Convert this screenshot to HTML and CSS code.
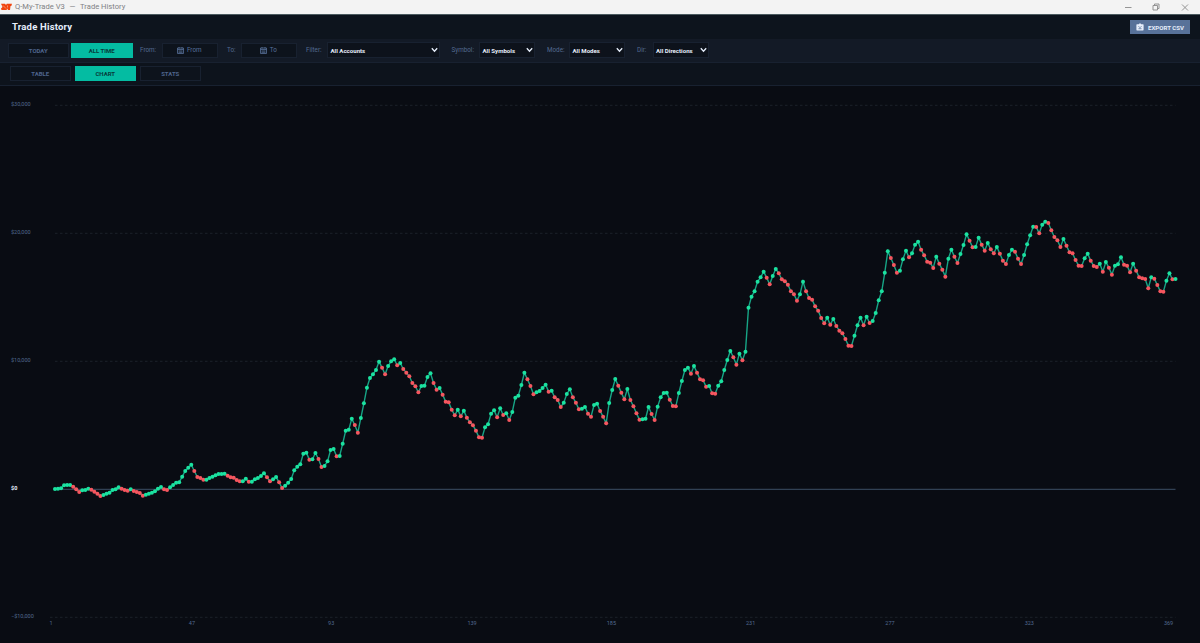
FILE: index.html
```html
<!DOCTYPE html>
<html lang="en">
<head>
  <meta charset="UTF-8">
  <meta name="viewport" content="width=device-width, initial-scale=1.0">
  <title>Q-My-Trade V3 — Trade History</title>
  <link rel="stylesheet" href="styles.css">
</head>
<body>
  <div class="titlebar">
    <svg class="app-icon" width="11" height="8" viewBox="0 0 11 8">
      <path d="M0 .8h4l1 1.200.8-1.200H11L10.300 3H9.500L9 7H7L6.300 5.500 5.500 7H0.500L0 5.500 1.500 4z" fill="#f0440f"/>
      <path d="M2 2.500l3 3M6.500 2.500v2" stroke="#ffd9c8" stroke-width=".5"/>
    </svg>
    <span class="window-title">Q-My-Trade V3 &nbsp;<span class="dash">—</span>&nbsp; Trade History</span>
    <svg class="window-buttons" width="70" height="13" viewBox="0 0 70 13">
      <path d="M5 6.500h6.500M33 4.500h4.500v4.500H33zM34.500 4.500V3h4.500v4.500h-1.500M62 3.500l6 6M68 3.500l-6 6" fill="none" stroke="#8a8a8a" stroke-width=".9"/>
    </svg>
  </div>

  <div class="header">
    <h1>Trade History</h1>
    <button class="export-btn">
      <svg width="8" height="8" viewBox="0 0 8 8">
        <path d="M1 1.200h1.800L3.300.4h1.400l.5.800H7q.6 0 .6.600v5q0 .6-.6.600H1q-.6 0-.6-.6v-5q0-.6.600-.6z" fill="#e6eefb"/>
        <path d="M2.500 3.200L4 4.700l1.500-1.500M2.500 5.700h3" fill="none" stroke="#587299" stroke-width=".8"/>
      </svg>
      <span>EXPORT CSV</span>
    </button>
  </div>

  <div class="toolbar">
    <button class="btn">TODAY</button>
    <button class="btn active">ALL TIME</button>
    <label class="lbl-from">From:</label>
    <button class="date-btn">
      <svg width="7" height="7" viewBox="0 0 7 7"><path d="M.5 1h6v5.500h-6zM.5 2.500h6M2 0v1.500M5 0v1.500M1.500 4h4M1.500 5.300h4" fill="none" stroke="#58719b" stroke-width=".8"/></svg>
      From
    </button>
    <label class="lbl-to">To:</label>
    <button class="date-btn">
      <svg width="7" height="7" viewBox="0 0 7 7"><path d="M.5 1h6v5.500h-6zM.5 2.500h6M2 0v1.500M5 0v1.500M1.500 4h4M1.500 5.300h4" fill="none" stroke="#58719b" stroke-width=".8"/></svg>
      To
    </button>
    <label class="lbl-filter">Filter:</label>
    <div class="select wide">All Accounts<svg width="7" height="6" viewBox="0 0 7 6"><path d="M.8 1.200l2.700 3 2.700-3"/></svg></div>
    <label class="lbl-symbol">Symbol:</label>
    <div class="select">All Symbols<svg width="7" height="6" viewBox="0 0 7 6"><path d="M.8 1.200l2.700 3 2.700-3"/></svg></div>
    <label class="lbl-mode">Mode:</label>
    <div class="select">All Modes<svg width="7" height="6" viewBox="0 0 7 6"><path d="M.8 1.200l2.700 3 2.700-3"/></svg></div>
    <label class="lbl-dir">Dir:</label>
    <div class="select">All Directions<svg width="7" height="6" viewBox="0 0 7 6"><path d="M.8 1.200l2.700 3 2.700-3"/></svg></div>
  </div>

  <div class="tabs">
    <button class="btn">TABLE</button>
    <button class="btn active">CHART</button>
    <button class="btn">STATS</button>
  </div>

  <svg id="chart" class="chart" width="1200" height="557" viewBox="0 86 1200 557"></svg>

  <script src="chart.js"></script>
</body>
</html>
```
FILE: styles.css
```css
* {
  box-sizing: border-box;
}

body {
  margin: 0;
  width: 1200px;
  height: 643px;
  overflow: hidden;
  background-color: #090c13;
  color: #e6eefb;
  font-family: Roboto, "Liberation Sans", sans-serif;
}

button {
  padding: 0;
  font-family: inherit;
  cursor: pointer;
}

.titlebar {
  display: flex;
  align-items: center;
  height: 15px;
  background-color: #f3f3f3;
  border-bottom: 1px solid #4b5a5f;
}

.app-icon {
  margin: 0 3px 0 1px;
}

.window-title {
  font-size: 7.6px;
  line-height: 14px;
  color: #7f8184;
  white-space: nowrap;
}

.dash {
  display: inline-block;
  margin: 0 1px;
}

.window-buttons {
  margin-left: auto;
  margin-right: 10px;
}

.header {
  display: flex;
  align-items: center;
  justify-content: space-between;
  height: 24px;
  padding: 0 10px 0 12px;
  background-color: #0d141d;
}

h1 {
  margin: -1px 0 0;
  font-size: 9.5px;
  font-weight: 700;
  letter-spacing: 0.2px;
}

.export-btn {
  display: flex;
  align-items: center;
  justify-content: center;
  gap: 4px;
  width: 60px;
  height: 14px;
  background-color: #587299;
  border: none;
  color: #e6eefb;
  font-size: 6.1px;
  font-weight: 700;
  white-space: nowrap;
}

.toolbar {
  display: flex;
  align-items: center;
  height: 24px;
  padding-left: 7.5px;
  padding-bottom: 1px;
  background-color: #131a26;
  border-bottom: 1px solid #182130;
}

.btn {
  width: 61.5px;
  height: 15px;
  background-color: #0d131c;
  border: 1px solid #182130;
  color: #4d648c;
  font-size: 6px;
  font-weight: 700;
}

.btn.active {
  background-color: #04bca2;
  border-color: #04bca2;
  color: #073b3b;
}

.toolbar .active {
  margin: 0 7.5px 0 2px;
}

label {
  font-size: 6.3px;
  color: #536a90;
  white-space: nowrap;
}

.lbl-from {
  width: 21.5px;
}

.lbl-to {
  width: 13.5px;
  margin-left: 9.5px;
}

.lbl-filter {
  width: 21px;
  margin-left: 9.5px;
}

.lbl-symbol {
  width: 27.5px;
  margin-left: 12px;
}

.lbl-mode {
  width: 22px;
  margin-left: 12px;
}

.lbl-dir {
  width: 15.5px;
  margin-left: 12px;
}

.date-btn {
  display: flex;
  align-items: center;
  justify-content: center;
  gap: 2.5px;
  width: 56px;
  height: 15px;
  background-color: #0d131c;
  border: 1px solid #182130;
  color: #58719b;
  font-size: 6.3px;
}

.select {
  display: flex;
  align-items: center;
  justify-content: space-between;
  width: 56px;
  height: 16px;
  padding: 0 1px 0 2.5px;
  background-color: #0d121b;
  border: 1px solid #182130;
  font-size: 6.1px;
  font-weight: 700;
  white-space: nowrap;
}

.select.wide {
  width: 112.5px;
}

.select path {
  fill: none;
  stroke: #e6eefb;
  stroke-width: 1.3;
}

.tabs {
  display: flex;
  align-items: center;
  gap: 3.5px;
  height: 23px;
  padding-left: 9.5px;
  padding-bottom: 1px;
  background-color: #0d131c;
  border-bottom: 1px solid #182130;
}

.chart {
  display: block;
}

.grid {
  stroke: #202631;
  stroke-width: 0.8;
  stroke-dasharray: 2.5 2.5;
}

.zero {
  stroke: #3c4f66;
  stroke-width: 1;
}

.axis-text {
  fill: #536a90;
  font-size: 5.5px;
}

.axis-text.strong {
  fill: #e6eefb;
  font-weight: 700;
}

.curve {
  fill: none;
  stroke: #17a586;
  stroke-width: 1.4;
}

.win {
  fill: #1be2a0;
}

.loss {
  fill: #f6565f;
}
```
FILE: chart.js
```js
// Running equity after each trade, one unit = 1/384 of $10,000
const equity = [
  1, 2, 3, 12, 13, 13, 8, 0, -8, -3, -2, 2, -1, -7, -13, -20, -17, -13, -10, -2,
  0, 6, 2, -2, -4, 0, -5, -8, -11, -19, -16, -13, -10, -6, 2, 7, 0, -2, 6, 13,
  20, 21, 38, 55, 65, 74, 55, 37, 34, 29, 29, 34, 38, 42, 46, 46, 47, 41, 36, 35,
  28, 24, 24, 32, 23, 23, 30, 34, 40, 48, 36, 24, 30, 37, 21, 4, 11, 20, 31, 57,
  68, 75, 107, 110, 89, 90, 109, 91, 67, 70, 84, 118, 121, 99, 100, 137, 176, 179, 212, 193,
  170, 214, 258, 305, 334, 345, 358, 383, 365, 345, 370, 384, 390, 372, 379, 361, 350, 339, 319, 309,
  291, 310, 311, 337, 348, 319, 299, 304, 284, 263, 261, 239, 222, 239, 219, 236, 215, 201, 192, 176,
  156, 155, 186, 195, 227, 237, 216, 243, 223, 228, 208, 232, 275, 281, 313, 350, 330, 310, 285, 291,
  295, 304, 314, 293, 296, 276, 268, 247, 260, 286, 300, 276, 260, 240, 242, 247, 227, 218, 253, 257,
  235, 218, 198, 259, 298, 331, 311, 290, 270, 301, 268, 249, 228, 209, 210, 212, 247, 226, 208, 248,
  276, 289, 290, 269, 250, 249, 289, 325, 358, 365, 347, 370, 350, 330, 327, 308, 310, 288, 287, 311,
  324, 358, 388, 415, 396, 374, 407, 387, 413, 545, 578, 594, 623, 636, 653, 635, 615, 640, 661, 648,
  630, 624, 614, 594, 585, 566, 585, 623, 594, 574, 569, 549, 536, 514, 498, 515, 494, 511, 490, 476,
  468, 451, 431, 430, 461, 492, 515, 492, 518, 499, 505, 529, 567, 594, 650, 714, 694, 673, 650, 656,
  690, 716, 696, 708, 734, 743, 719, 702, 683, 680, 664, 698, 677, 659, 638, 692, 719, 698, 679, 706,
  733, 765, 746, 726, 727, 755, 734, 716, 739, 720, 708, 727, 707, 686, 676, 703, 719, 713, 692, 676,
  703, 735, 762, 788, 787, 768, 794, 803, 799, 777, 757, 747, 727, 751, 731, 711, 708, 688, 671, 670,
  693, 707, 686, 670, 667, 677, 653, 682, 665, 644, 671, 675, 696, 674, 671, 651, 677, 656, 636, 633,
  631, 603, 636, 632, 613, 594, 593, 626, 648, 630, 631
];

const chart = document.getElementById('chart');
const left = 55;
const right = 1175.5;
const zeroY = 489.3;
const gridStep = 128;
const step = (right - left) / (equity.length - 1);

function add(tag, attrs, text) {
  const el = document.createElementNS('http://www.w3.org/2000/svg', tag);
  for (const key in attrs) el.setAttribute(key, attrs[key]);
  if (text) el.textContent = text;
  chart.appendChild(el);
}

// Y axis
[['$30,000', 3], ['$20,000', 2], ['$10,000', 1], ['$0', 0], ['−$10,000', -1]].forEach(([label, n]) => {
  const y = zeroY - n * gridStep;
  add('line', { x1: n < 0 ? 50 : left, x2: right, y1: y, y2: y, class: n === 0 ? 'zero' : 'grid' });
  add('text', { x: 11, y: y + 0.4, class: n === 0 ? 'axis-text strong' : 'axis-text' }, label);
});

// X axis
for (let i = 1; i <= 369; i += 46) {
  add('text', { x: left + (i - 1) * step - 5.5, y: 625, class: 'axis-text' }, String(i));
}

const points = equity.map((v, i) => [left + i * step, zeroY - v / 3]);
add('polyline', { points: points.map(p => p.join(',')).join(' '), class: 'curve' });

points.forEach(([x, y], i) => {
  const loss = i > 0 && equity[i] < equity[i - 1];
  add('circle', { cx: x, cy: y, r: 2, class: loss ? 'loss' : 'win' });
});
```
